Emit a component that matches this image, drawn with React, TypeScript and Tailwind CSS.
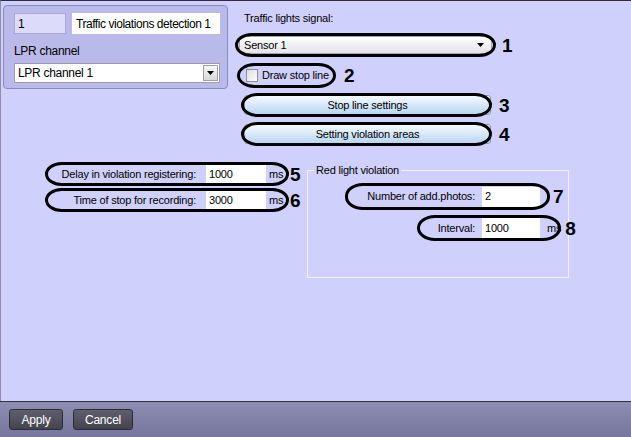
import React from 'react';

const Ring: React.FC<{ className?: string; children: React.ReactNode }> = ({ className = '', children }) => (
  <div className={`relative flex items-center whitespace-nowrap ${className}`}>
    {children}
    <div className="pointer-events-none absolute inset-0 rounded-[18px/13px] border-[3px] border-black" />
  </div>
);

const Num: React.FC<{ n: number; className?: string }> = ({ n, className = '' }) => (
  <span className={`text-[19px] font-bold leading-none tracking-normal text-black ${className}`}>{n}</span>
);

const Arrow = () => (
  <svg width="7" height="4" viewBox="0 0 7 4">
    <path d="M0 0h7L3.5 4z" fill="#000" />
  </svg>
);

const App: React.FC = () => {
  return (
    <div className="flex h-[437px] w-[631px] flex-col overflow-hidden font-['Liberation_Sans',Arial,sans-serif] text-[11px] tracking-[-0.2px] text-black">
      <main className="h-[401px] border-l border-t border-l-[#8c8cac] border-t-[#2c2c3c] bg-[#d0d0fc]">
        <div className="flex items-start">
          {/* channel panel */}
          <div className="ml-[2px] mt-[4px] h-[84px] w-[225px] rounded-[4px] border border-[#8a8ac0] bg-[#b9b9ea] pl-[10px] pt-[7px]">
            <div className="flex whitespace-nowrap text-[12px]">
              <div className="flex h-[21px] w-[52px] items-center border border-[#a8a8d8] bg-[#dcdcfa] px-[3px]">1</div>
              <div className="ml-[6px] flex h-[21px] w-[148px] items-center bg-white px-[4px] tracking-[-0.45px]">Traffic violations detection 1</div>
            </div>
            <div className="mt-[10px] text-[12px] leading-[14px] tracking-[-0.3px]">LPR channel</div>
            <div className="mt-[5px] flex h-[20px] w-[206px] items-center justify-between border border-[#9a9ab4] bg-white pl-[3px] pr-[1px] text-[12px] tracking-[-0.3px]">
              <span>LPR channel 1</span>
              <span className="flex h-[16px] w-[15px] items-center justify-center border border-[#a0a0a0] bg-gradient-to-b from-[#f8f8f8] to-[#d8d8d8]">
                <Arrow />
              </span>
            </div>
          </div>

          {/* traffic light settings */}
          <div className="ml-[7px] flex flex-col">
            <div className="ml-[9px] mt-[10px] leading-[14px]">Traffic lights signal:</div>
            <div className="mt-[8px] flex items-center">
              <Ring className="h-[24px] w-[261px] pl-[4px]">
                <div className="flex h-[18px] w-[253px] items-center justify-between rounded-[2px] border border-[#a4a4b4] bg-gradient-to-b from-white to-[#e2e2e8] pl-[4px] pr-[7px]">
                  <span>Sensor 1</span>
                  <Arrow />
                </div>
              </Ring>
              <Num n={1} className="ml-[6px]" />
            </div>
            <div className="ml-[2px] mt-[6px] flex items-center">
              <Ring className="h-[25px] w-[99px] pl-[9px]">
                <span className="h-[13px] w-[12px] border border-[#8c8c9c] bg-gradient-to-br from-[#dcdce4] to-white" />
                <span className="ml-[4px]">Draw stop line</span>
              </Ring>
              <Num n={2} className="ml-[8px]" />
            </div>
            <div className="ml-[6px] mt-[5px] flex items-center">
              <Ring className="h-[24px] w-[251px] pl-[3px]">
                <button className="flex h-[20px] w-[247px] items-center justify-center rounded-[3px] border border-[#8a9ab4] bg-gradient-to-b from-[#f6faff] to-[#b8d6f2]">
                  Stop line settings
                </button>
              </Ring>
              <Num n={3} className="ml-[7px]" />
            </div>
            <div className="ml-[6px] mt-[5px] flex items-center">
              <Ring className="h-[24px] w-[251px] pl-[3px]">
                <button className="flex h-[20px] w-[247px] items-center justify-center rounded-[3px] border border-[#8a9ab4] bg-gradient-to-b from-[#f6faff] to-[#b8d6f2]">
                  Setting violation areas
                </button>
              </Ring>
              <Num n={4} className="ml-[7px]" />
            </div>
          </div>
        </div>

        <div className="mt-[16px] flex items-start">
          <div className="ml-[44px] flex flex-col gap-[2px]">
            <div className="flex items-center">
              <Ring className="h-[24px] w-[244px]">
                <span className="w-[151px] text-right">Delay in violation registering:</span>
                <span className="ml-[10px] flex h-[19px] w-[60px] items-center bg-white px-[3px]">1000</span>
                <span className="ml-[3px]">ms</span>
              </Ring>
              <Num n={5} className="ml-[1px] w-[14px]" />
            </div>
            <div className="flex items-center">
              <Ring className="h-[24px] w-[244px]">
                <span className="w-[151px] text-right">Time of stop for recording:</span>
                <span className="ml-[10px] flex h-[19px] w-[60px] items-center bg-white px-[3px]">3000</span>
                <span className="ml-[3px]">ms</span>
              </Ring>
              <Num n={6} className="ml-[1px] w-[14px]" />
            </div>
          </div>

          <div className="relative ml-[3px] mt-[8px] h-[108px] w-[262px] border border-[#f2f2ff]">
            <span className="absolute -top-[8px] left-[6px] whitespace-nowrap bg-[#d0d0fc] px-[2px] leading-[14px]">Red light violation</span>
            <div className="ml-[37px] mt-[12px] flex items-center">
              <Ring className="h-[27px] w-[205px]">
                <span className="w-[130px] text-right">Number of add.photos:</span>
                <span className="ml-[7px] flex h-[20px] w-[58px] items-center bg-white px-[3px]">2</span>
              </Ring>
              <Num n={7} className="ml-[3px]" />
            </div>
            <div className="ml-[109px] mt-[5px] flex items-center">
              <Ring className="h-[26px] w-[152px]">
                <span className="w-[58px] text-right">Interval:</span>
                <span className="ml-[7px] flex h-[20px] w-[58px] items-center bg-white px-[3px]">1000</span>
                <span className="ml-[7px]">ms</span>
              </Ring>
              <Num n={8} className="ml-[4px]" />
            </div>
          </div>
        </div>
      </main>

      <footer className="flex h-[36px] items-center gap-[10px] border-t border-[#30303e] bg-gradient-to-b from-[#8e8eb2] to-[#76769e] pl-[9px]">
        <button className="h-[21px] w-[54px] rounded-[3px] border border-[#2c2c38] bg-gradient-to-b from-[#5e5e6e] to-[#44444f] text-[12px] text-white">
          Apply
        </button>
        <button className="h-[21px] w-[60px] rounded-[3px] border border-[#2c2c38] bg-gradient-to-b from-[#5e5e6e] to-[#44444f] text-[12px] text-white">
          Cancel
        </button>
      </footer>
    </div>
  );
};

export default App;
